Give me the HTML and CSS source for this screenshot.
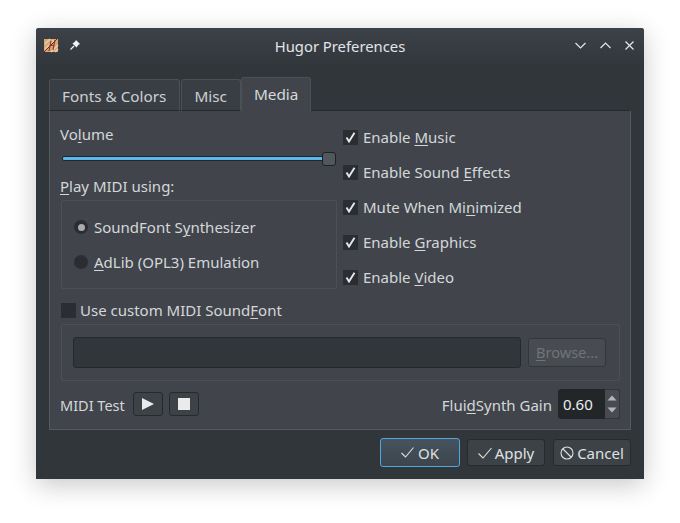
FILE: index.html
```html
<!DOCTYPE html>
<html lang="en">

<head>
    <meta charset="UTF-8">
    <title>Hugor Preferences</title>
    <link rel="stylesheet" href="styles.css">
</head>

<body>
    <main class="window">
        <header class="titlebar">
            <div class="title-left">
                <svg class="app-icon" width="18" height="18" viewBox="0 0 18 18">
                    <rect x="2" y="3" width="14" height="13" fill="#d4a679" />
                    <path d="M3 8 L8 3 M3 13 L12 4 M9 16 L16 9 M13 16 L16 13" stroke="#eccba4" stroke-width="1.5" />
                    <path d="M0.5 17.5 L17.5 0.5" stroke="#6a2a22" stroke-width="1" />
                    <path d="M7 15 L9 5 M11 14 L13 4 M7 10 L12 9" stroke="#8a3a28" stroke-width="1.2" fill="none" />
                </svg>
                <svg class="pin" width="12" height="12" viewBox="0 0 12 12">
                    <path d="M7 1 L11 5 L9.5 5.8 L7.5 8.5 L3.5 4.5 L6.2 2.5 Z" fill="#f0f2f3" />
                    <path d="M5 7 L1.5 10.5" stroke="#f0f2f3" stroke-width="1.3" />
                </svg>
            </div>
            <h1 class="title">Hugor Preferences</h1>
            <div class="win-buttons">
                <svg width="11" height="7" viewBox="0 0 11 7"><path d="M0.5 1 L5.5 6 L10.5 1" /></svg>
                <svg width="11" height="7" viewBox="0 0 11 7"><path d="M0.5 6 L5.5 1 L10.5 6" /></svg>
                <svg width="9" height="9" viewBox="0 0 9 9"><path d="M0.5 0.5 L8.5 8.5 M8.5 0.5 L0.5 8.5" /></svg>
            </div>
        </header>

        <div class="content">
            <nav class="tabs">
                <div class="tab">Fonts &amp; Colors</div>
                <div class="tab">Misc</div>
                <div class="tab tab-active">Media</div>
            </nav>

            <section class="pane">
                <div class="top-row">
                    <div class="left-col">
                        <div class="label-volume">Vo<u>l</u>ume</div>
                        <div class="slider">
                            <div class="slider-track"></div>
                            <div class="slider-handle"></div>
                        </div>
                        <div class="label-play"><u>P</u>lay MIDI using:</div>
                        <div class="radio-group">
                            <div class="radio-row"><span class="radio radio-on"></span><span>SoundFont S<u>y</u>nthesizer</span></div>
                            <div class="radio-row"><span class="radio"></span><span><u>A</u>dLib (OPL3) Emulation</span></div>
                        </div>
                    </div>
                    <div class="right-col">
                        <div class="check-row"><span class="check"><svg width="11" height="11" viewBox="0 0 11 11"><path d="M1.5 5.5 L4 9.5 L9.5 0.8" /></svg></span><span>Enable <u>M</u>usic</span></div>
                        <div class="check-row"><span class="check"><svg width="11" height="11" viewBox="0 0 11 11"><path d="M1.5 5.5 L4 9.5 L9.5 0.8" /></svg></span><span>Enable Sound <u>E</u>ffects</span></div>
                        <div class="check-row"><span class="check"><svg width="11" height="11" viewBox="0 0 11 11"><path d="M1.5 5.5 L4 9.5 L9.5 0.8" /></svg></span><span>Mute When Mi<u>n</u>imized</span></div>
                        <div class="check-row"><span class="check"><svg width="11" height="11" viewBox="0 0 11 11"><path d="M1.5 5.5 L4 9.5 L9.5 0.8" /></svg></span><span>Enable <u>G</u>raphics</span></div>
                        <div class="check-row"><span class="check"><svg width="11" height="11" viewBox="0 0 11 11"><path d="M1.5 5.5 L4 9.5 L9.5 0.8" /></svg></span><span>Enable <u>V</u>ideo</span></div>
                    </div>
                </div>

                <div class="custom-row"><span class="check"></span><span>Use custom MIDI Sound<u>F</u>ont</span></div>

                <div class="font-group">
                    <div class="path-input"></div>
                    <div class="browse"><u>B</u>rowse...</div>
                </div>

                <div class="test-row">
                    <span class="test-label">MIDI Test</span>
                    <div class="tool-btn">
                        <svg width="12" height="12" viewBox="0 0 12 12"><path d="M0 0 L12 6 L0 12 Z" /></svg>
                    </div>
                    <div class="tool-btn">
                        <svg width="12" height="12" viewBox="0 0 12 12"><rect width="12" height="12" /></svg>
                    </div>
                    <span class="gain-label">Flui<u>d</u>Synth Gain</span>
                    <div class="spin">
                        <div class="spin-value">0.60</div>
                        <div class="spin-arrows">
                            <svg width="10" height="6" viewBox="0 0 10 6"><path d="M5 0.5 L9.5 5.5 L0.5 5.5 Z" /></svg>
                            <svg width="10" height="6" viewBox="0 0 10 6"><path d="M0.5 0.5 L9.5 0.5 L5 5.5 Z" /></svg>
                        </div>
                    </div>
                </div>
            </section>

            <footer class="actions">
                <div class="btn btn-default">
                    <svg width="13" height="11" viewBox="0 0 13 11"><path d="M0.5 6 L4.5 10 L12.5 0.5" /></svg>OK
                </div>
                <div class="btn">
                    <svg width="14" height="12" viewBox="0 0 14 12"><path d="M0.5 6.5 L5 11 L13.5 1" /></svg>Apply
                </div>
                <div class="btn btn-cancel">
                    <svg width="14" height="14" viewBox="0 0 14 14"><circle cx="7" cy="7" r="6" /><path d="M3 3 L11 11" /></svg>Cancel
                </div>
            </footer>
        </div>
    </main>
</body>

</html>
```

FILE: styles.css
```css
html,
body {
    margin: 0;
    height: 100%;
}

body {
    background: #fff;
    padding: 28px 36px 0;
    box-sizing: border-box;
    font-family: "Noto Sans", sans-serif;
    font-size: 15px;
    line-height: 20px;
    color: #d4d7da;
}

u {
    text-decoration-thickness: 1px;
    text-underline-offset: 2px;
}

.window {
    width: 608px;
    height: 451px;
    background: #31363b;
    border-radius: 3px 3px 0 0;
    box-shadow: 0 6px 26px rgba(0, 0, 0, 0.22);
    display: flex;
    flex-direction: column;
}

.titlebar {
    height: 36px;
    flex: none;
    padding: 0 10px;
    background: linear-gradient(#3d424a, #32373c);
    border-radius: 3px 3px 0 0;
    display: grid;
    grid-template-columns: 1fr auto 1fr;
    align-items: center;
}

.title-left {
    display: flex;
    align-items: center;
    gap: 9px;
    margin-left: -4px;
    margin-top: -2px;
}

.title {
    margin: 0;
    font-size: 14.8px;
    font-weight: normal;
    color: #e2e5e7;
}

.win-buttons {
    display: flex;
    justify-content: flex-end;
    align-items: center;
    gap: 14px;
    margin-top: -2px;
}

.win-buttons svg {
    fill: none;
    stroke: #e4e6e8;
    stroke-width: 1.2;
}

.content {
    flex: 1;
    padding: 13px 13px 12px;
    display: flex;
    flex-direction: column;
}

.tabs {
    height: 34px;
    flex: none;
    display: flex;
    align-items: flex-end;
    gap: 1px;
    position: relative;
    z-index: 1;
}

.tab {
    height: 20px;
    padding: 6px 13px 4px 12px;
    font-size: 15.3px;
    color: #cdd0d3;
    background: #393e44;
    border: 1px solid #4b5055;
    border-bottom: 1px solid #25292d;
    border-radius: 3px 3px 0 0;
}

.tab-active {
    padding: 6px 12px 7px;
    margin-left: -1px;
    background: #41454b;
    border-bottom-color: #41454b;
    color: #d6d9dc;
    margin-bottom: -1px;
}

.pane {
    height: 320px;
    box-sizing: border-box;
    background: #41454b;
    border: 1px solid #55595e;
    border-top-color: #25292d;
    border-left-color: #565a5e;
    padding: 0 10px 0 11px;
    margin-top: -1px;
}

.top-row {
    display: flex;
    height: 179px;
}

.left-col {
    width: 276px;
    flex: none;
}

.label-volume {
    padding-top: 13px;
    margin-left: -1px;
}

.slider {
    height: 13px;
    margin-top: 8px;
    display: flex;
    align-items: center;
    position: relative;
}

.slider-track {
    margin-left: 1px;
    width: 262px;
    height: 5px;
    box-sizing: border-box;
    background: #5cb8ec;
    border: 1px solid #23272b;
    border-radius: 2px;
}

.slider-handle {
    position: absolute;
    left: 261px;
    top: 0;
    width: 14px;
    height: 14px;
    box-sizing: border-box;
    background: #52575c;
    border: 1px solid #1e2226;
    border-radius: 3px;
}

.label-play {
    margin-top: 11px;
    margin-left: -1px;
}

.radio-group {
    margin-top: 4px;
    height: 89px;
    box-sizing: border-box;
    border: 1px solid #4c5055;
    border-radius: 2px;
    padding: 16px 0 0 12px;
    display: flex;
    flex-direction: column;
    gap: 15px;
}

.radio-row {
    display: flex;
    align-items: center;
    gap: 6px;
    height: 20px;
}

.radio {
    width: 14px;
    height: 14px;
    border-radius: 50%;
    background: #2a2e32;
    display: flex;
    align-items: center;
    justify-content: center;
}

.radio-on::after {
    content: "";
    width: 7px;
    height: 7px;
    border-radius: 50%;
    background: #a9acae;
}

.right-col {
    margin-left: 6px;
    padding-top: 16px;
    display: flex;
    flex-direction: column;
    gap: 15px;
}

.check-row {
    display: flex;
    align-items: center;
    gap: 5px;
    height: 20px;
}

.check {
    width: 15px;
    height: 15px;
    flex: none;
    background: #2a2e32;
    display: flex;
    align-items: center;
    justify-content: center;
}

.check svg {
    fill: none;
    stroke: #e6e8ea;
    stroke-width: 1.9;
}

.custom-row {
    display: flex;
    align-items: center;
    gap: 4px;
    height: 20px;
    margin-top: 10px;
}

.font-group {
    margin-top: 4px;
    height: 57px;
    box-sizing: border-box;
    border: 1px solid #4c5055;
    border-radius: 2px;
    padding: 12px 13px 0 11px;
    display: flex;
    gap: 7px;
}

.path-input {
    width: 448px;
    height: 31px;
    box-sizing: border-box;
    background: #31363a;
    border: 1px solid #25292d;
    border-radius: 3px;
}

.browse {
    width: 78px;
    height: 29px;
    margin-top: 1px;
    box-sizing: border-box;
    background: #484c51;
    border: 1px solid #33373b;
    border-radius: 3px;
    color: #6f7478;
    font-size: 14.6px;
    text-align: center;
    line-height: 26px;
}

.test-row {
    display: flex;
    align-items: center;
    height: 30px;
    margin-top: 8px;
    margin-left: -1px;
}

.test-label {
    width: 67px;
    flex: none;
    padding-top: 2px;
    font-size: 14.5px;
}

.tool-btn {
    width: 30px;
    height: 24px;
    box-sizing: border-box;
    margin-left: 6px;
    background: #3d4247;
    border: 1px solid #26292d;
    border-radius: 3px;
    display: flex;
    align-items: center;
    justify-content: center;
}

.tool-btn svg {
    fill: #e8eaec;
}

.gain-label {
    margin-left: auto;
    margin-right: 6px;
    padding-top: 2px;
}

.spin {
    width: 62px;
    height: 30px;
    background: #232629;
    border-radius: 3px;
    display: flex;
}

.spin-value {
    flex: 1;
    padding-left: 5px;
    line-height: 31px;
    color: #eceef0;
}

.spin-arrows {
    width: 14px;
    background: #484c51;
    border: 1px solid #33373b;
    border-left: none;
    border-radius: 0 3px 3px 0;
    display: flex;
    flex-direction: column;
    align-items: center;
    justify-content: center;
    gap: 6px;
}

.spin-arrows svg {
    fill: #b4b7ba;
}

.actions {
    margin-top: 8px;
    display: flex;
    justify-content: flex-end;
    align-items: center;
    gap: 7px;
}

.btn {
    width: 78px;
    height: 27px;
    box-sizing: border-box;
    background: #3d4247;
    border: 1px solid #26292d;
    border-radius: 3px;
    display: flex;
    align-items: center;
    justify-content: center;
    gap: 3px;
    color: #dfe1e3;
}

.btn svg {
    fill: none;
    stroke: #dfe1e3;
    stroke-width: 1.1;
}

.btn-default {
    width: 80px;
    height: 29px;
    gap: 4px;
    background: linear-gradient(#46535e, #3c454d);
    border-color: #4ea8da;
}

.btn-cancel {
    margin-left: 1px;
}
```
